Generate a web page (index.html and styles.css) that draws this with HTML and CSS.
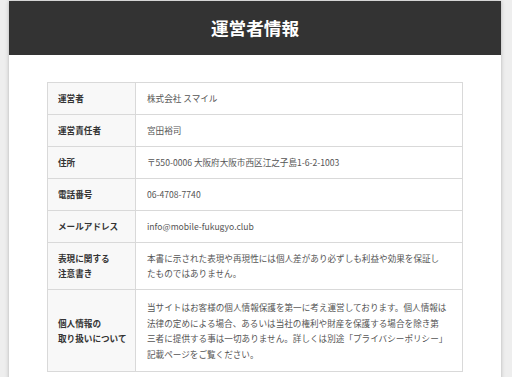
FILE: index.html
```html
<!DOCTYPE html>
<html lang="ja">
<head>
<meta charset="utf-8">
<title>運営者情報</title>
<link rel="stylesheet" href="styles.css">
</head>
<body>
<div class="card">
  <header class="head"><h1 class="title">運営者情報</h1></header>
  <div class="body">
    <table class="info">
      <tr><th>運営者</th><td>株式会社 スマイル</td></tr>
      <tr><th>運営責任者</th><td>宮田裕司</td></tr>
      <tr><th>住所</th><td>〒550-0006 大阪府大阪市西区江之子島1-6-2-1003</td></tr>
      <tr><th>電話番号</th><td>06-4708-7740</td></tr>
      <tr><th>メールアドレス</th><td>info@mobile-fukugyo.club</td></tr>
      <tr><th>表現に関する<br>注意書き</th><td>本書に示された表現や再現性には個人差があり必ずしも利益や効果を保証し<br>たものではありません。</td></tr>
      <tr class="tall"><th>個人情報の<br>取り扱いについて</th><td>当サイトはお客様の個人情報保護を第一に考え運営しております。個人情報は<br>法律の定めによる場合、あるいは当社の権利や財産を保護する場合を除き第<br>三者に提供する事は一切ありません。詳しくは別途「プライバシーポリシー」<br>記載ページをご覧ください。</td></tr>
    </table>
  </div>
</div>
</body>
</html>
```
FILE: styles.css
```css
html, body {
  margin: 0;
  padding: 0;
}
body {
  background: #eeeeee;
  font-family: "Noto Sans CJK JP", "Noto Sans", sans-serif;
  padding: 1px 11px 0 9px;
}
.card {
  background: #ffffff;
  box-shadow: 0 0 4px rgba(0, 0, 0, 0.25);
  padding-bottom: 20px;
}
.head {
  background: #333333;
  height: 54px;
  display: flex;
  align-items: center;
  justify-content: center;
}
.title {
  margin: 0;
  color: #ffffff;
  font-size: 17.6px;
  font-weight: bold;
  line-height: 1;
}
.body {
  padding: 27px 38px 0 38px;
}
.info {
  width: 100%;
  border-collapse: collapse;
  border: 1px solid #cfcfcf;
  font-size: 8.6px;
  line-height: 15px;
}
.info th, .info td {
  border: 1px solid #d9d9d9;
  padding: 8px 10px 8px 11px;
  vertical-align: middle;
  text-align: left;
  white-space: nowrap;
}
.info th {
  width: 69px;
  background: #f8f8f8;
  color: #333333;
  font-weight: bold;
  padding: 8px 8px 8px 10px;
}
.info td {
  color: #555555;
}
.info .tall td {
  line-height: 15.5px;
  padding-top: 10px;
  padding-bottom: 9px;
}
```
